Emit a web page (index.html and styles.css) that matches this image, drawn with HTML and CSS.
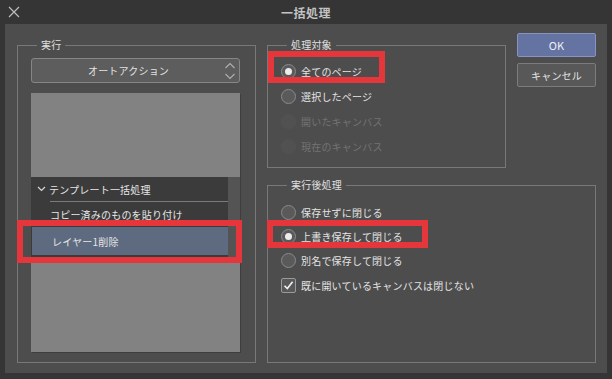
FILE: index.html
```html
<!DOCTYPE html>
<html lang="ja">
<head>
<meta charset="utf-8">
<title>一括処理</title>
<link rel="stylesheet" href="styles.css">
</head>
<body>
<div class="window">
  <div class="titlebar">
    <svg class="close" width="12" height="12" viewBox="0 0 12 12"><path d="M1 1L11 11M11 1L1 11" stroke="#bdbdbd" stroke-width="1.2" fill="none"/></svg>
    <div class="title">一括処理</div>
  </div>
  <div class="panel">
    <fieldset class="group group-exec">
      <legend>実行</legend>
      <div class="dropdown">
        <span>オートアクション</span>
        <svg class="spin" width="12" height="20" viewBox="0 0 12 20"><path d="M1.5 7L6 2.5L10.5 7M1.5 13L6 17.5L10.5 13" stroke="#b0b0b0" stroke-width="1.1" fill="none"/></svg>
      </div>
      <div class="list">
        <div class="list-top"></div>
        <div class="rows">
          <div class="rows-main">
            <div class="row row-parent">
              <svg class="chev" width="9" height="6" viewBox="0 0 9 6"><path d="M1 1L4.5 4.5L8 1" stroke="#d8d8d8" stroke-width="1.2" fill="none"/></svg>
              <span>テンプレート一括処理</span>
            </div>
            <div class="sep"></div>
            <div class="row row-child">コピー済みのものを貼り付け</div>
            <div class="row row-sel">レイヤー1削除</div>
          </div>
          <div class="scroll"></div>
        </div>
        <div class="list-bottom"></div>
      </div>
    </fieldset>
    <div class="right">
      <fieldset class="group group-target">
        <legend>処理対象</legend>
        <div class="opt"><span class="radio on"></span>全てのページ</div>
        <div class="opt"><span class="radio"></span>選択したページ</div>
        <div class="opt disabled"><span class="radio"></span>開いたキャンバス</div>
        <div class="opt disabled"><span class="radio"></span>現在のキャンバス</div>
      </fieldset>
      <div class="buttons">
        <div class="btn btn-ok">OK</div>
        <div class="btn">キャンセル</div>
      </div>
      <fieldset class="group group-after">
        <legend>実行後処理</legend>
        <div class="opt"><span class="radio"></span>保存せずに閉じる</div>
        <div class="opt"><span class="radio on"></span>上書き保存して閉じる</div>
        <div class="opt"><span class="radio"></span>別名で保存して閉じる</div>
        <div class="opt opt-check"><span class="check"><svg width="13" height="13" viewBox="0 0 13 13"><path d="M2.5 6.8L5.3 9.6L10.6 2.8" stroke="#f0f0f0" stroke-width="1.6" fill="none"/></svg></span>既に開いているキャンバスは閉じない</div>
      </fieldset>
    </div>
    <div class="mark mark-1"></div>
    <div class="mark mark-2"></div>
    <div class="mark mark-3"></div>
  </div>
</div>
</body>
</html>
```

FILE: styles.css
```css
* { box-sizing: border-box; }
html, body {
  margin: 0;
  padding: 0;
  background: #353535;
  font-family: "Noto Sans CJK JP", "Noto Sans", sans-serif;
  color: #e4e4e4;
  font-size: 10px;
  letter-spacing: 0.2px;
}
.window {
  width: 612px;
  height: 379px;
  overflow: hidden;
}
.titlebar {
  height: 24px;
  display: flex;
  align-items: center;
  justify-content: center;
  position: relative;
}
.close {
  position: absolute;
  left: 8px;
  top: 6px;
}
.title {
  font-size: 12px;
  font-weight: bold;
  color: #c4c4c4;
  letter-spacing: 0.5px;
}
.panel {
  position: relative;
  margin-left: 5px;
  width: 602px;
  height: 349px;
  background: #4d4d4d;
  display: flex;
  align-items: flex-start;
  padding: 9px 0 0 12px;
  gap: 11px;
}
fieldset.group {
  margin: 0;
  padding: 0;
  border: 1px solid #787878;
  min-width: 0;
}
.group legend {
  margin-left: 6px;
  padding: 0 4px;
  font-size: 10px;
  line-height: 14px;
  height: 14px;
  color: #e0e0e0;
}
.group-exec {
  margin-top: 5px !important;
  width: 239px;
  height: 325px;
  padding: 6px 15px 10px 13px !important;
  display: flex;
  flex-direction: column;
  gap: 10px;
}
.dropdown {
  height: 25px;
  flex: none;
  background: #5d5d5d;
  border: 1px solid #868686;
  border-radius: 3px;
  display: flex;
  align-items: center;
  justify-content: center;
  position: relative;
  color: #e2e2e2;
  padding-right: 14px;
}
.spin {
  position: absolute;
  right: 3px;
  top: 2px;
}
.list {
  flex: 1;
  background: #828282;
  display: flex;
  flex-direction: column;
  box-shadow: 1px 1px 0 #3e3e3e;
}
.list-top { height: 84px; }
.rows {
  display: flex;
  background: #3b3b3b;
}
.rows-main {
  flex: 1;
  display: flex;
  flex-direction: column;
  padding-bottom: 3px;
}
.scroll {
  width: 12px;
  background: #545454;
}
.row {
  display: flex;
  align-items: center;
  color: #e6e6e6;
}
.row-parent {
  height: 24px;
  padding-left: 6px;
  gap: 3px;
}
.sep {
  height: 1px;
  margin-left: 19px;
  background: #7a7a7a;
}
.row-child {
  height: 25px;
  padding-left: 19px;
}
.row-sel {
  height: 28px;
  margin-left: 1px;
  padding-left: 20px;
  background: #5e6a80;
}
.list-bottom { flex: 1; }
.right {
  display: grid;
  grid-template-columns: 239px 11px 79px;
  grid-template-rows: auto auto;
  row-gap: 10px;
}
.group-target {
  grid-column: 1;
  grid-row: 1;
  margin-top: 5px !important;
  height: 130px;
  padding: 7px 0 0 13px !important;
}
.buttons {
  grid-column: 3;
  grid-row: 1;
  display: flex;
  flex-direction: column;
  gap: 6px;
}
.btn {
  height: 24px;
  border: 1px solid #7c7c7c;
  background: #585858;
  border-radius: 2px;
  display: flex;
  align-items: center;
  justify-content: center;
  color: #e4e4e4;
}
.btn-ok {
  background: #6573a2;
  border-color: #8793c0;
  font-size: 11px;
  color: #eef0f6;
}
.group-after {
  grid-column: 1 / 4;
  grid-row: 2;
  height: 185px;
  padding: 8px 0 0 13px !important;
}
.opt {
  height: 25px;
  display: flex;
  align-items: center;
  gap: 5px;
  color: #e4e4e4;
}
.group-after .opt { height: 24px; }
.group-after .opt-check { height: 26px; }
.opt.disabled { color: #737373; }
.radio {
  width: 15px;
  height: 15px;
  border-radius: 50%;
  border: 1px solid #8a8a8a;
  background: #5a5a5a;
  display: flex;
  align-items: center;
  justify-content: center;
  flex: none;
}
.radio.on::after {
  content: "";
  width: 7px;
  height: 7px;
  border-radius: 50%;
  background: #ececec;
}
.disabled .radio {
  border-color: #535353;
  background: #515151;
}
.check {
  width: 15px;
  height: 15px;
  border: 1px solid #9a9a9a;
  border-radius: 2px;
  background: #585858;
  display: flex;
  align-items: center;
  justify-content: center;
  flex: none;
}
.mark {
  position: absolute;
  border: 6px solid #e5363b;
}
.mark-1 { left: 12px; top: 196px; width: 225px; height: 43px; }
.mark-2 { left: 263px; top: 27px; width: 117px; height: 32px; }
.mark-3 { left: 262px; top: 196px; width: 161px; height: 28px; }
```
